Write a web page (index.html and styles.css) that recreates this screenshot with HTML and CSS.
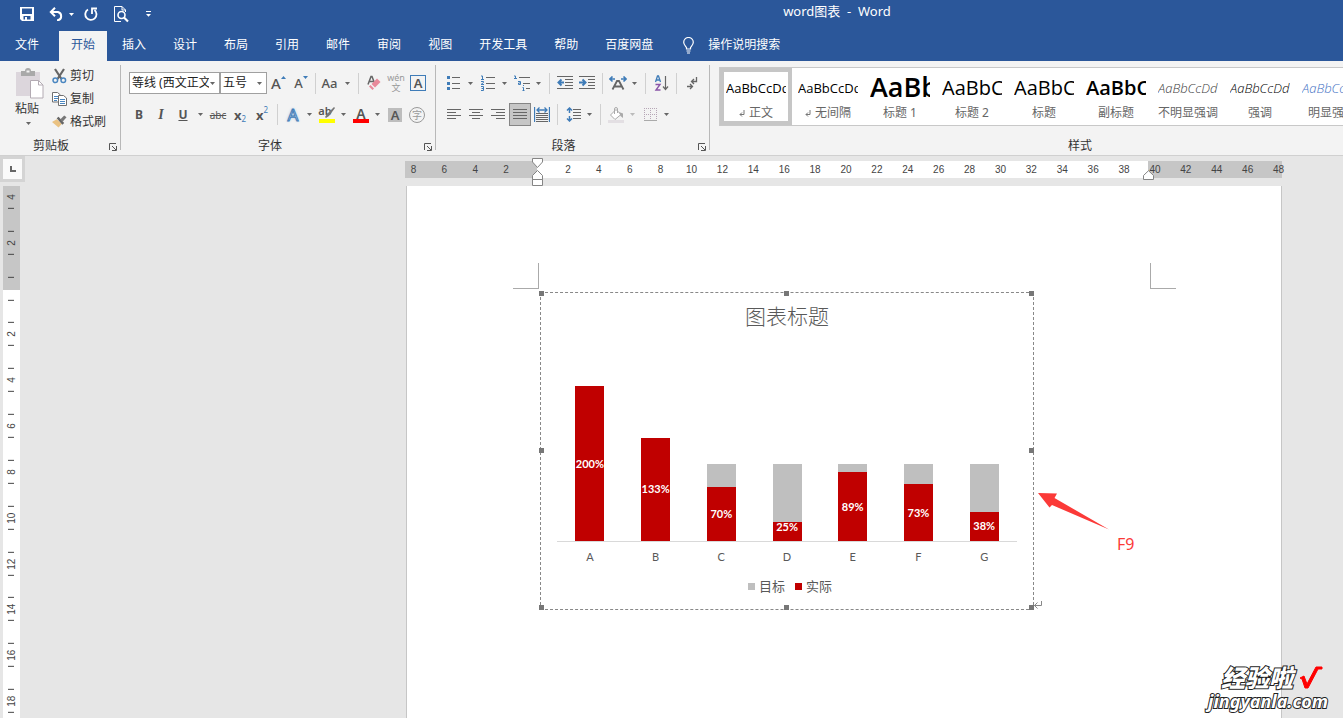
FILE: index.html
```html
<!DOCTYPE html>
<html lang="zh-CN">
<head>
<meta charset="utf-8">
<meta name="viewport" content="width=device-width, initial-scale=1">
<title>word图表 - Word</title>
<link rel="stylesheet" href="styles.css">
</head>
<body>
<svg class="defs" aria-hidden="true">
  <symbol id="caret" viewBox="0 0 5 3"><path d="M0 0h5L2.5 3z" fill="currentColor"/></symbol>
  <symbol id="launch" viewBox="0 0 8 8"><path d="M.5 7V.5H7M3 3l4 4M7.500 3v4.500H3" fill="none" stroke="#555"/></symbol>
  <symbol id="pilcrow" viewBox="0 0 6 7"><path d="M5 0v4.500H1M3 2.500l-2 2 2 2" fill="none" stroke="#777"/></symbol>
</svg>

<header class="top">
  <div class="titlebar">
    <div class="quick">
      <button class="q-save" aria-label="保存"><svg width="14" height="14" viewBox="0 0 14 14"><path d="M0 0h14v14H2l-2-2z" fill="#fff"/><path d="M2 1.500h10V7H2zM3.500 9h7v3.500h-7z" fill="#2b579a"/><path d="M5 10h2v3H5z" fill="#fff"/></svg></button>
      <button class="q-undo" aria-label="撤消"><svg width="15" height="14" viewBox="0 0 15 14"><path d="M1.500 5H9a4.300 4.300 0 0 1 0 8.300H8M6 .8L1.800 5 6 9.200" fill="none" stroke="#fff" stroke-width="2"/></svg></button>
      <button class="q-more" aria-label="撤消选项"><svg width="5" height="3"><use href="#caret"/></svg></button>
      <button class="q-redo" aria-label="重复"><svg width="14" height="15" viewBox="0 0 14 15"><path d="M4 2.500A5.600 5.600 0 1 0 10.500 3" fill="none" stroke="#fff" stroke-width="1.800"/><path d="M8 7V1.500h5" fill="none" stroke="#fff" stroke-width="1.800"/></svg></button>
      <button class="q-preview" aria-label="打印预览"><svg width="15" height="17" viewBox="0 0 15 17"><path d="M7 15.500H.5V.5H8l3.500 3.500V6M8 .5V4h3.500" fill="none" stroke="#fff"/><circle cx="7.500" cy="9" r="3.500" fill="none" stroke="#fff" stroke-width="1.600"/><path d="M10 11.500l4 4" stroke="#fff" stroke-width="2.200"/></svg></button>
      <button class="q-custom" aria-label="自定义快速访问工具栏"><svg width="5" height="6" viewBox="0 0 5 6"><path d="M0 0h5v1H0zM0 3h5L2.500 5.800z" fill="#fff"/></svg></button>
    </div>
    <div class="doc-title">word图表&nbsp; -&nbsp; Word</div>
  </div>
  <nav class="tabs">
    <button class="file">文件</button>
    <button class="active">开始</button>
    <button>插入</button>
    <button>设计</button>
    <button>布局</button>
    <button>引用</button>
    <button>邮件</button>
    <button>审阅</button>
    <button>视图</button>
    <button>开发工具</button>
    <button>帮助</button>
    <button>百度网盘</button>
    <button class="tell"><svg width="11" height="17" viewBox="0 0 11 17"><path d="M3.500 12V10.500C2.500 9 .7 7.800.7 5.300a4.800 4.800 0 0 1 9.600 0c0 2.500-1.800 3.700-2.800 5.200V12zM3.500 14h4M4 16h3" fill="none" stroke="#fff" stroke-width="1.200"/></svg>操作说明搜索</button>
  </nav>
</header>

<section class="ribbon">
  <div class="group clipboard">
    <div class="clip-body">
      <button class="paste">
        <svg width="29" height="31" viewBox="0 0 29 31"><path d="M1 4h24v24H1z" fill="#dcd6dc"/><path d="M6 3h4a3 3 0 0 1 6 0h4v5H6z" fill="#a9a9a9"/><path d="M11.500 2.500h3v2h-3z" fill="#f3f3f3"/><path d="M15.500 12.500h8l4.500 4.500v13H15.500z" fill="#fff" stroke="#b3abb3"/><path d="M23.500 12.500V17H28" fill="none" stroke="#b3abb3"/></svg>
        <span>粘贴</span>
        <svg width="5" height="3"><use href="#caret"/></svg>
      </button>
      <div class="clip-list">
        <button><svg width="15" height="16" viewBox="0 0 15 16"><path d="M3 1l6.500 10M12 1L5.500 11" stroke="#666" stroke-width="2.200" fill="none"/><circle cx="3.300" cy="12.300" r="2.300" fill="none" stroke="#4a86c0" stroke-width="1.500"/><circle cx="11.300" cy="12.300" r="2.300" fill="none" stroke="#4a86c0" stroke-width="1.500"/></svg>剪切</button>
        <button><svg width="15" height="15" viewBox="0 0 15 15"><path d="M.5 1.500h5L8.500 4v7H.5z" fill="#fff" stroke="#707070"/><path d="M2 5.500h4M2 7.500h4M2 9.500h3" stroke="#4a86c0"/><path d="M6.500 4.500h5L14.500 7v7.500h-8z" fill="#fff" stroke="#707070"/><path d="M8 8.500h5M8 10.500h5M8 12.500h5" stroke="#4a86c0"/></svg>复制</button>
        <button><svg width="16" height="15" viewBox="0 0 16 15"><path d="M0 8l5-3 5.500 5-3.500 4z" fill="#eac282"/><path d="M5 4l2-1.500L13 9l-2 2z" fill="#666"/><path d="M9 5l4-4 2.500 2-4 4.500z" fill="#777"/></svg>格式刷</button>
      </div>
    </div>
    <div class="foot"><span>剪贴板</span><button class="launch" aria-label="剪贴板选项"><svg width="8" height="8"><use href="#launch"/></svg></button></div>
  </div>

  <div class="group font">
    <div class="row first">
      <label class="pick face"><select aria-label="字体"><option>等线 (西文正文)</option></select><svg width="5" height="3"><use href="#caret"/></svg></label>
      <label class="pick size"><select aria-label="字号"><option>五号</option></select><svg width="5" height="3"><use href="#caret"/></svg></label>
      <button class="ib" aria-label="增大字号"><span class="g g15">A</span><svg class="mark" width="5" height="3" viewBox="0 0 5 3"><path d="M0 3h5L2.500 0z" fill="#3f7cb8"/></svg></button>
      <button class="ib" aria-label="减小字号"><span class="g g13">A</span><svg class="mark" width="5" height="3" viewBox="0 0 5 3"><path d="M0 0h5L2.500 3z" fill="#3f7cb8"/></svg></button>
      <i class="sep"></i>
      <button class="ib"><span class="g g13">Aa</span></button><button class="cb" aria-label="更改大小写"><svg width="5" height="3"><use href="#caret"/></svg></button>
      <i class="sep"></i>
      <button class="ib" aria-label="清除格式"><svg width="16" height="16" viewBox="0 0 16 16"><path d="M2 9.500L5 1.500h1L8.500 8M3.500 6.500h4" fill="none" stroke="#666" stroke-width="1.500"/><path d="M5.500 9L11 3.500l3.500 3.500L9 12.500z" fill="#e8899a"/><path d="M4.500 10l3.500 3.500-1.500 1.500L3 11.500z" fill="#e8899a"/></svg></button>
      <button class="ib pinyin" aria-label="拼音指南"><span>wén</span><span class="han">文</span></button>
      <button class="ib" aria-label="字符边框"><span class="boxed">A</span></button>
    </div>
    <div class="row">
      <button class="ib"><b>B</b></button>
      <button class="ib"><em>I</em></button>
      <button class="ib"><b class="under">U</b></button><button class="cb wide" aria-label="下划线"><svg width="5" height="3"><use href="#caret"/></svg></button>
      <button class="ib"><s>abc</s></button>
      <button class="ib script"><b>x</b><small>2</small></button>
      <button class="ib script sup"><b>x</b><small>2</small></button>
      <i class="sep"></i>
      <button class="ib"><span class="glow">A</span></button><button class="cb" aria-label="文本效果"><svg width="5" height="3"><use href="#caret"/></svg></button>
      <button class="ib colour yellow" aria-label="突出显示"><span>ab</span><svg class="pen" width="11" height="12" viewBox="0 0 11 12"><path d="M10 0l1 1-6 8-3 2-1-1 2-3z" fill="#777"/></svg></button><button class="cb" aria-label="突出显示颜色"><svg width="5" height="3"><use href="#caret"/></svg></button>
      <button class="ib colour red"><span class="big">A</span></button><button class="cb" aria-label="字体颜色"><svg width="5" height="3"><use href="#caret"/></svg></button>
      <button class="ib"><span class="shade">A</span></button>
      <button class="ib"><span class="ring">字</span></button>
    </div>
    <div class="foot"><span>字体</span><button class="launch" aria-label="字体选项"><svg width="8" height="8"><use href="#launch"/></svg></button></div>
  </div>

  <div class="group para">
    <div class="row first">
      <button class="ib" aria-label="项目符号"><svg width="16" height="16" viewBox="0 0 16 16"><path d="M1 1h3v3H1zM1 7h3v3H1zM1 12h3v3H1z" fill="#3f7cb8"/><path d="M6 2.500h8M6 8.500h8M6 13.500h8" stroke="#666"/></svg></button><button class="cb" aria-label="项目符号库"><svg width="5" height="3"><use href="#caret"/></svg></button>
      <button class="ib" aria-label="编号"><svg width="16" height="16" viewBox="0 0 16 16"><path d="M1 1h1.500v3M1 4.500h3M1 6.500h2.500v1L1 9.500h3M1 11.500h2.500v4H1M1.500 13.500h2" fill="none" stroke="#3f7cb8"/><path d="M6 2.500h9M6 8.500h9M6 13.500h9" stroke="#666"/></svg></button><button class="cb" aria-label="编号库"><svg width="5" height="3"><use href="#caret"/></svg></button>
      <button class="ib" aria-label="多级列表"><svg width="18" height="16" viewBox="0 0 18 16"><path d="M1 1h1.500v3M1 3.500h3M5 6.500h2.500v3H5.500v-1.500h2M10.500 10v1M9.500 12.500h1v3M9.500 15.500h2" fill="none" stroke="#3f7cb8"/><path d="M6 2.500h11M10 8.500h7M13 13.500h4" stroke="#666"/></svg></button><button class="cb" aria-label="列表样式"><svg width="5" height="3"><use href="#caret"/></svg></button>
      <i class="sep"></i>
      <button class="ib" aria-label="减少缩进量"><svg width="16" height="14" viewBox="0 0 16 14"><path d="M0 .5h16M8 3.500h8M8 6.500h8M8 9.500h8M0 12.500h16" stroke="#666"/><path d="M7 6.500H2M4.500 3.500l-3 3 3 3" fill="none" stroke="#3f7cb8" stroke-width="2"/></svg></button>
      <button class="ib" aria-label="增加缩进量"><svg width="16" height="14" viewBox="0 0 16 14"><path d="M0 .5h16M9 3.500h7M9 6.500h7M9 9.500h7M0 12.500h16" stroke="#666"/><path d="M0 6.500h6M3.500 3.500l3 3-3 3" fill="none" stroke="#3f7cb8" stroke-width="2"/></svg></button>
      <i class="sep"></i>
      <button class="ib" aria-label="中文版式"><svg width="18" height="14" viewBox="0 0 18 14"><path d="M3.500 13.500L8 5h2l4.500 8.500M5.500 10.500h7" fill="none" stroke="#666" stroke-width="1.800"/><path d="M1 3h5M3.500.5L1 3l2.500 2.500M12 3h5M14.500.5L17 3l-2.500 2.500" fill="none" stroke="#3f7cb8" stroke-width="1.600"/></svg></button><button class="cb" aria-label="中文版式选项"><svg width="5" height="3"><use href="#caret"/></svg></button>
      <i class="sep"></i>
      <button class="ib" aria-label="排序"><svg width="15" height="16" viewBox="0 0 15 16"><path d="M1.500 7l2-6h1l2 6M2 5h4" fill="none" stroke="#3f7cb8" stroke-width="1.300"/><path d="M1.500 9.500h4.500l-4 5.500H6.500" fill="none" stroke="#8a55a8" stroke-width="1.400"/><path d="M11.500 1v13M9 11.500l2.500 3 2.500-3" fill="none" stroke="#666" stroke-width="1.200"/></svg></button>
      <i class="sep"></i>
      <button class="ib" aria-label="显示编辑标记"><svg width="11" height="13" viewBox="0 0 11 13"><path d="M9.500 0v4.500H5M7 2L4.500 4.500 7 7M0 9.500h5M3 7l2.500 2.500L3 12" fill="none" stroke="#666" stroke-width="1.300"/></svg></button>
    </div>
    <div class="row">
      <button class="ib" aria-label="左对齐"><svg width="14" height="11" viewBox="0 0 14 11"><path d="M0 .5h14M0 3.500h9M0 6.500h14M0 9.500h9" stroke="#666"/></svg></button>
      <button class="ib" aria-label="居中"><svg width="14" height="11" viewBox="0 0 14 11"><path d="M0 .5h14M3 3.500h8M0 6.500h14M3 9.500h8" stroke="#666"/></svg></button>
      <button class="ib" aria-label="右对齐"><svg width="14" height="11" viewBox="0 0 14 11"><path d="M0 .5h14M5 3.500h9M0 6.500h14M5 9.500h9" stroke="#666"/></svg></button>
      <button class="ib on" aria-label="两端对齐"><svg width="14" height="11" viewBox="0 0 14 11"><path d="M0 .5h14M0 3.500h14M0 6.500h14M0 9.500h14" stroke="#666"/></svg></button>
      <button class="ib" aria-label="分散对齐"><svg width="16" height="15" viewBox="0 0 16 15"><path d="M.5 0v15M15.500 0v15M3 3h10M5.500.5L3 3l2.500 2.500M10.500.5L13 3l-2.500 2.500" fill="none" stroke="#3f7cb8" stroke-width="1.300"/><path d="M2 6.500h12M2 8.500h12M2 10.500h12M2 12.500h12M2 14.500h12" stroke="#666"/></svg></button>
      <i class="sep"></i>
      <button class="ib" aria-label="行距"><svg width="15" height="15" viewBox="0 0 15 15"><path d="M3.500 1v5M3.500 9v5M1 3.500L3.500 1 6 3.500M1 11.500L3.500 14 6 11.500" fill="none" stroke="#3f7cb8" stroke-width="1.500"/><path d="M7 2.500h8M7 5.500h8M7 8.500h8M7 11.500h8" stroke="#666"/></svg></button><button class="cb" aria-label="行距选项"><svg width="5" height="3"><use href="#caret"/></svg></button>
      <i class="sep"></i>
      <button class="ib" aria-label="底纹"><svg width="16" height="16" viewBox="0 0 16 16"><path d="M8 2.500L13 7.500l-6 5L2.500 8z" fill="#fff" stroke="#aaa"/><path d="M6.500 7V2a1.500 1.500 0 0 1 3 0v4" fill="none" stroke="#aaa"/><path d="M11 5l4 1.500V11l-2.500-2z" fill="#aaa"/><path d="M0 13h16v3H0z" fill="#e3dfe3"/></svg></button><button class="cb dim" aria-label="底纹颜色"><svg width="5" height="3"><use href="#caret"/></svg></button>
      <button class="ib" aria-label="边框"><svg width="13" height="13" viewBox="0 0 13 13"><path d="M.5 0v12M6.500 0v12M12.500 0v12M0 .5h13M0 6.500h13" fill="none" stroke="#b6a6b6" stroke-dasharray="1 1"/><path d="M0 12.500h13" stroke="#aaa"/></svg></button><button class="cb" aria-label="边框选项"><svg width="5" height="3"><use href="#caret"/></svg></button>
    </div>
    <div class="foot"><span>段落</span><button class="launch" aria-label="段落选项"><svg width="8" height="8"><use href="#launch"/></svg></button></div>
  </div>

  <div class="group styles">
    <div class="gallery">
      <button class="chosen"><span class="sample">AaBbCcDd</span><span class="name"><svg width="6" height="7"><use href="#pilcrow"/></svg>正文</span></button>
      <button><span class="sample">AaBbCcDd</span><span class="name"><svg width="6" height="7"><use href="#pilcrow"/></svg>无间隔</span></button>
      <button><span class="sample h1">AaBb</span><span class="name">标题 1</span></button>
      <button><span class="sample h2">AaBbC</span><span class="name">标题 2</span></button>
      <button><span class="sample h2">AaBbC</span><span class="name">标题</span></button>
      <button><span class="sample h2 strong">AaBbC</span><span class="name">副标题</span></button>
      <button><span class="sample it soft">AaBbCcDd</span><span class="name">不明显强调</span></button>
      <button><span class="sample it">AaBbCcDd</span><span class="name">强调</span></button>
      <button><span class="sample it blue">AaBbCcDd</span><span class="name">明显强调</span></button>
    </div>
    <div class="foot"><span>样式</span></div>
  </div>
</section>

<main class="workspace">
  <aside class="side">
    <button class="tabstop" aria-label="制表符"><svg width="6" height="6" viewBox="0 0 6 6"><path d="M1 0v5h5" fill="none" stroke="#666" stroke-width="2"/></svg></button>
    <div class="vruler">
      <div class="vscale">
        <span>4</span><span>2</span><span></span><span>2</span><span>4</span><span>6</span><span>8</span><span>10</span><span>12</span><span>14</span><span>16</span><span>18</span>
      </div>
    </div>
  </aside>
  <div class="desk">
    <div class="hruler">
      <div class="hscale">
        <span>8</span><span>6</span><span>4</span><span>2</span><span></span><span>2</span><span>4</span><span>6</span><span>8</span><span>10</span><span>12</span><span>14</span><span>16</span><span>18</span><span>20</span><span>22</span><span>24</span><span>26</span><span>28</span><span>30</span><span>32</span><span>34</span><span>36</span><span>38</span><span>40</span><span>42</span><span>44</span><span>46</span><span>48</span>
      </div>
      <svg class="indent left" width="11" height="28" viewBox="0 0 11 28"><path d="M.5.500h10V4L5.500 9.500.5 4z M5.500 12.500l5 5v4H.5v-4z M.5 21.500h10v6H.5z" fill="#fff" stroke="#858585"/></svg>
      <svg class="indent right" width="11" height="10" viewBox="0 0 11 10"><path d="M5.500.700l5 4.800v4H.5v-4z" fill="#fff" stroke="#858585"/></svg>
    </div>
    <article class="page">
      <i class="crop crop-l"></i><i class="crop crop-r"></i>
      <figure class="chart">
        <figcaption>图表标题</figcaption>
        <div class="plot">
          <div class="col"><div class="goal"></div><div class="real" style="height:100%">200%</div></div>
          <div class="col"><div class="goal"></div><div class="real" style="height:66.5%">133%</div></div>
          <div class="col"><div class="goal"></div><div class="real" style="height:35%">70%</div></div>
          <div class="col"><div class="goal"></div><div class="real short" style="height:12.5%">25%</div></div>
          <div class="col"><div class="goal"></div><div class="real" style="height:44.5%">89%</div></div>
          <div class="col"><div class="goal"></div><div class="real" style="height:36.5%">73%</div></div>
          <div class="col"><div class="goal"></div><div class="real" style="height:19%">38%</div></div>
        </div>
        <div class="axis"><span>A</span><span>B</span><span>C</span><span>D</span><span>E</span><span>F</span><span>G</span></div>
        <div class="legend"><span class="key grey">目标</span><span class="key crimson">实际</span></div>
        <i class="handle n w"></i><i class="handle n c"></i><i class="handle n e"></i>
        <i class="handle m w"></i><i class="handle m e"></i>
        <i class="handle s w"></i><i class="handle s c"></i><i class="handle s e"></i>
        <svg class="return" width="10" height="8" viewBox="0 0 10 8"><path d="M8.500 0v4.500H1M4.500 1.500l-3 3 3 3" fill="none" stroke="#888"/></svg>
        <div class="note">
          <svg width="71" height="37" viewBox="0 0 71 37"><path d="M0 0l19 .5-2.500 4.500L71 36.500 14 12l-2.500 2.500z" fill="#fb3a38"/></svg>
          <span>F9</span>
        </div>
      </figure>
    </article>
  </div>
  <div class="brand">
    <div class="brand-top"><span>经验啦</span><svg width="25" height="24" viewBox="0 0 25 24"><path d="M2 12l4-2 3 8L18 1h6v2h-4L10 22H7L4 13z" fill="#f00" stroke="#f00"/></svg></div>
    <div class="brand-url">jingyanla.com</div>
  </div>
</main>
</body>
</html>
```

FILE: styles.css
```css
* { box-sizing: border-box; }

body {
  margin: 0;
  height: 100vh;
  display: flex;
  flex-direction: column;
  overflow: hidden;
  background: #e6e6e6;
  color: #333;
  font: 12px/16px "Noto Sans", "Noto Sans CJK SC", sans-serif;
}

button {
  border: 0;
  padding: 0;
  background: none;
  color: inherit;
  font: inherit;
}

svg { display: block; flex: none; }
.defs { position: absolute; width: 0; height: 0; }

/* Title bar and tabs */
.top { flex: none; background: #2b579a; color: #fff; }
.titlebar { display: flex; height: 31px; }
.quick { display: flex; align-items: center; flex: 0 0 331px; padding-left: 20px; padding-bottom: 3px; }
.q-undo { margin-left: 15px; }
.q-more { margin-left: 5px; }
.q-redo { margin-left: 10px; }
.q-preview { margin-left: 16px; }
.q-custom { margin-left: 17px; }
.doc-title { flex: 1; text-align: center; line-height: 23px; font-size: 13px; }

.tabs { display: flex; gap: 3px; height: 30px; padding-left: 3px; white-space: nowrap; }
.tabs button { padding: 0 12px 2px; }
.tabs .file { margin-right: 5px; }
.tabs .active { background: #f3f3f3; color: #2b579a; }
.tabs .tell { display: flex; align-items: center; gap: 14px; margin-left: 3px; }

/* Ribbon */
.ribbon {
  flex: none;
  display: flex;
  padding: 4px 0 5px;
  border-bottom: 1px solid #d0d0d0;
  background: #f3f3f3;
  overflow: hidden;
}
.group { display: flex; flex-direction: column; flex: none; border-right: 1px solid #b8b8b8; }
.foot { position: relative; height: 12px; margin-top: auto; line-height: 15px; text-align: center; }
.launch { position: absolute; right: 3px; bottom: -1px; }
.row { display: flex; align-items: center; height: 23px; padding-left: 7px; }
.first { height: 22px; margin: 7px 0 9px; }
.ib { width: 22px; height: 23px; display: flex; align-items: center; justify-content: center; position: relative; color: #555; }
.cb { width: 11px; height: 22px; margin-right: 1px; display: flex; align-items: center; justify-content: center; color: #666; }
.wide { width: 12px; }
.dim { color: #bbb; }
.sep { width: 9px; height: 21px; display: flex; justify-content: center; }
.sep::before { content: ""; width: 1px; background: #d0d0d0; }
.on { background: #c6c6c6; border: 1px solid #858585; }

.clipboard { width: 121px; }
.clip-body { display: flex; margin-top: -1px; padding-left: 15px; }
.paste { width: 29px; display: flex; flex-direction: column; align-items: flex-start; padding-top: 4px; }
.paste > span { margin: 2px 0 5px; }
.paste > svg:last-child { margin-left: 11px; color: #666; }
.clip-list { margin-left: 8px; }
.clip-list button { display: flex; align-items: center; gap: 3px; height: 23px; white-space: nowrap; }
.clip-list svg { width: 15px; }
.clipboard .foot { padding-right: 18px; }

.font { width: 315px; height: 85px; }
.font .foot { padding-right: 16px; }
.pick { position: relative; height: 22px; }
.pick select {
  appearance: none;
  width: 100%;
  height: 22px;
  padding: 0 10px 0 2px;
  border: 1px solid #a0a0a0;
  border-radius: 0;
  background: #fff;
  color: #222;
  font: inherit;
}
.pick svg { position: absolute; right: 5px; top: 10px; color: #666; }
.face { width: 91px; margin-left: 1px; }
.size { width: 47px; }
.g { font-weight: 500; }
.g15 { font-size: 15px; padding-right: 4px; }
.g13 { font-size: 13px; padding-right: 3px; }
.mark { position: absolute; right: 3px; top: 4px; }
.pinyin { flex-direction: column; color: #999; font-size: 9px; line-height: 9px; }
.han { line-height: 11px; }
.boxed { width: 16px; border: 1px solid #3f7cb8; font-size: 13px; line-height: 14px; font-weight: 600; }
.ib em { font-family: "Liberation Serif", serif; font-size: 14px; font-weight: bold; }
.under { text-decoration: underline; }
.ib s { font-size: 10px; }
.script b { font-size: 13px; }
.script small { font-size: 8px; line-height: 8px; color: #3f7cb8; align-self: flex-end; padding-bottom: 3px; }
.sup small { align-self: flex-start; padding-top: 3px; }
.glow { color: #f3f3f3; font-size: 17px; -webkit-text-stroke: 1px #3f7cb8; text-shadow: 0 0 3px #8ab4e0; }
.colour { align-items: flex-start; font-weight: 600; font-size: 11px; }
.colour::after { content: ""; position: absolute; left: 3px; bottom: 3px; width: 16px; height: 4px; }
.yellow { padding-right: 4px; }
.yellow::after { background: #ff0; }
.pen { position: absolute; right: 3px; top: 4px; }
.red::after { background: #f00; }
.big { font-size: 14px; line-height: 21px; }
.shade { width: 14px; background: #bdbdbd; font-size: 13px; line-height: 14px; font-weight: 600; }
.ring { width: 16px; border: 1px solid #999; border-radius: 50%; color: #999; font-size: 10px; line-height: 14px; }

.para { width: 274px; }
.para .foot { padding-right: 18px; }

.styles { width: 740px; padding: 2px 0 0 9px; border: 0; }
.styles .foot { padding-right: 9px; }
.gallery { display: flex; width: 731px; border: 1px solid #c8c8c8; background: #fff; }
.gallery button { display: flex; flex-direction: column; width: 72px; height: 57px; padding: 2px 2px 0; border: 4px solid transparent; }
.gallery .chosen { border-color: #c6c6c6; }
.sample { width: 60px; height: 31px; overflow: hidden; color: #000; text-align: left; white-space: nowrap; font: 400 13px/28px "Open Sans", sans-serif; }
.h1 { font-size: 27px; font-weight: 600; line-height: 25px; }
.h2 { font-size: 20px; font-weight: 400; }
.strong { font-weight: 600; }
.it { font-style: italic; font-weight: 300; }
.soft { color: #404040; }
.blue { color: #4472c4; }
.name { display: flex; align-items: center; justify-content: center; gap: 4px; width: 60px; color: #666; white-space: nowrap; }

/* Work area */
.workspace { position: relative; flex: 1; min-height: 0; display: flex; overflow: hidden; }
.side { flex: 0 0 25px; }
.tabstop { display: flex; align-items: center; justify-content: center; width: 25px; height: 26px; border: 3px solid #d4d4d4; background: #fafafa; }
.vruler { width: 17px; height: 532px; margin: 4px 0 0 3px; overflow: hidden; background: linear-gradient(#c6c6c6 104px, #fff 104px); }
.vscale { display: grid; grid-template-rows: repeat(12, 1fr); height: 550px; margin-top: -12px; }
.vscale span {
  display: flex;
  align-items: center;
  justify-content: center;
  writing-mode: vertical-rl;
  transform: rotate(180deg);
  color: #444;
  font: 10px/17px "Liberation Sans", sans-serif;
  background:
    linear-gradient(#444, #444) 50% 11px / 6px 1px no-repeat,
    linear-gradient(#444, #444) 50% 34px / 6px 1px no-repeat;
}
.desk { flex: 1; min-width: 0; display: flex; flex-direction: column; padding: 5px 61px 0 380px; }
.hruler { position: relative; flex: none; height: 17px; margin-bottom: 8px; background: linear-gradient(90deg, #c6c6c6 132px, #fff 132px, #fff calc(100% - 134px), #c6c6c6 calc(100% - 134px)); }
.hscale { display: grid; grid-template-columns: repeat(29, 1fr); margin: 0 -12px 0 -7px; text-align: center; color: #444; font: 10px/17px "Liberation Sans", sans-serif; }
.indent { position: absolute; }
.indent.left { left: 127px; top: -3px; }
.indent.right { right: 128px; top: 9px; }

.page { position: relative; flex: 1; margin-left: 1px; padding: 106px 131px 0 133px; background: #fff; border: solid #c6c6c6; border-width: 0 1px; }
.crop { position: absolute; top: 77px; width: 26px; height: 26px; border: solid #aaa; }
.crop-l { left: 106px; border-width: 0 1px 1px 0; }
.crop-r { right: 105px; border-width: 0 0 1px 1px; }

/* Chart */
.chart { position: relative; max-width: 494px; margin: 0; padding: 8px 16px 14px; border: 1px dashed #888; color: #595959; }
.chart figcaption { text-align: center; font-size: 21px; line-height: 30px; font-weight: 300; }
.plot { display: flex; height: 156px; margin-top: 55px; border-bottom: 1px solid #d9d9d9; }
.col { flex: 1; display: grid; grid-template: 100% / 29px; justify-content: center; align-items: end; }
.goal, .real { grid-area: 1 / 1; }
.goal { height: 50%; background: #bfbfbf; }
.real { display: flex; align-items: center; justify-content: center; background: #c00000; color: #fff; font: bold 11px/16px Lato, sans-serif; }
.short { align-items: flex-start; line-height: 10px; }
.axis { display: flex; margin-top: 7px; text-align: center; font: 11px/16px Lato, sans-serif; }
.axis span { flex: 1; }
.legend { display: flex; justify-content: center; gap: 10px; margin-top: 13px; padding: 0 0 1px 6px; font-size: 13px; }
.key { display: flex; align-items: center; gap: 4px; }
.key::before { content: ""; width: 7px; height: 7px; background: #bfbfbf; }
.crimson::before { background: #c00000; }
.handle { position: absolute; width: 5px; height: 5px; background: #777; }
.n { top: -2px; }
.m { top: calc(50% - 3px); }
.s { bottom: -1px; }
.w { left: -2px; }
.c { left: calc(50% - 3px); }
.e { right: -1px; }
.return { position: absolute; left: 100%; bottom: 0; }
.note { position: absolute; left: 497px; top: 200px; color: #fb3a38; font-size: 16px; line-height: 24px; }
.note span { display: block; margin: 2px 0 0 79px; }

/* Watermark */
.brand { position: absolute; right: 15px; bottom: 6px; text-align: right; color: #fff; font-style: italic; font-weight: 900; -webkit-text-stroke: 2px #222; paint-order: stroke fill; }
.brand-top { display: flex; align-items: center; justify-content: flex-end; gap: 5px; padding-right: 5px; font-size: 24px; line-height: 24px; }
.brand-url { font: italic bold 18px/22px "Noto Sans", sans-serif; }
```
